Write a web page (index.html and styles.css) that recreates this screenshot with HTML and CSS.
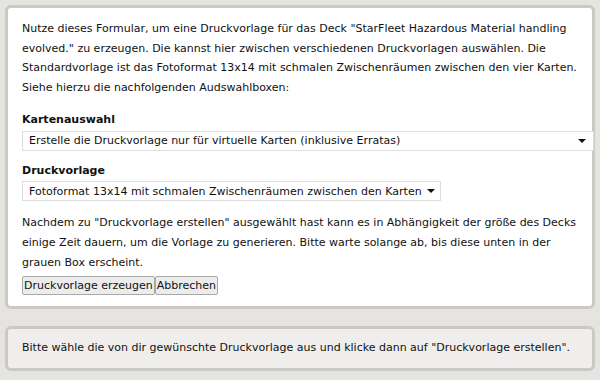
FILE: index.html
```html
<!doctype html>
<html lang="de">
  <head>
    <meta charset="utf-8">
    <meta name="viewport" content="width=device-width, initial-scale=1">
    <title>Druckvorlage erstellen</title>
    <link rel="stylesheet" href="styles.css">
  </head>
  <body>
    <form class="panel" id="form-druck">
      <p class="intro">Nutze dieses Formular, um eine Druckvorlage für das Deck "StarFleet Hazardous Material handling evolved." zu erzeugen. Die kannst hier zwischen verschiedenen Druckvorlagen auswählen. Die Standardvorlage ist das Fotoformat 13x14 mit schmalen Zwischenräumen zwischen den vier Karten. Siehe hierzu die nachfolgenden Audswahlboxen:</p>
      <label class="field-label" for="karten">Kartenauswahl</label>
      <div class="select-wrap wide">
        <select id="karten" name="karten">
          <option>Erstelle die Druckvorlage nur für virtuelle Karten (inklusive Erratas)</option>
          <option>Erstelle die Druckvorlage für alle Karten</option>
        </select>
      </div>
      <label class="field-label second" for="vorlage">Druckvorlage</label>
      <div class="select-wrap">
        <select id="vorlage" name="vorlage">
          <option>Fotoformat 13x14 mit schmalen Zwischenräumen zwischen den Karten</option>
        </select>
      </div>
      <p class="hint">Nachdem zu "Druckvorlage erstellen" ausgewählt hast kann es in Abhängigkeit der größe des Decks einige Zeit dauern, um die Vorlage zu generieren. Bitte warte solange ab, bis diese unten in der grauen Box erscheint.</p>
      <div class="buttons">
        <button type="submit">Druckvorlage erzeugen</button><button type="reset">Abbrechen</button>
      </div>
    </form>
    <div class="panel result">
      Bitte wähle die von dir gewünschte Druckvorlage aus und klicke dann auf "Druckvorlage erstellen".
    </div>
  </body>
</html>
```

FILE: styles.css
```css
body {
  margin: 0;
  padding: 5px 5px 0 5px;
  background-color: #e6e4e0;
  font-family: "DejaVu Sans", Verdana, sans-serif;
  font-size: 11px;
  line-height: 19.7px;
  color: #111;
}

.panel {
  display: block;
  margin: 0 0 17px 0;
  padding: 11px 14px 11px 14px;
  background: #fff;
  border: 3px solid #cbc9c5;
  border-radius: 6px;
}

.intro, .hint {
  margin: 0;
}

.field-label {
  display: block;
  margin-top: 12px;
  font-weight: bold;
}

.field-label.second {
  margin-top: 10px;
}

.select-wrap {
  position: relative;
  display: inline-block;
  margin-top: 1px;
  vertical-align: top;
}

.select-wrap.wide {
  display: block;
  width: calc(100% + 16px);
}

/* kleines Dreieck statt des Standardpfeils */
.select-wrap::after {
  content: "";
  position: absolute;
  right: 6px;
  top: 8px;
  border-left: 4px solid transparent;
  border-right: 4px solid transparent;
  border-top: 4px solid #111;
  pointer-events: none;
}

.select-wrap.wide::after {
  right: 8px;
}

select {
  display: block;
  width: 100%;
  height: 20px;
  margin: 0;
  padding: 0 18px 0 6px;
  font-family: inherit;
  font-size: 11px;
  color: #111;
  background: #fff;
  border: 1px solid #ddd;
  border-radius: 0;
  appearance: none;
  -webkit-appearance: none;
}

.hint {
  margin-top: 12px;
}

.buttons {
  margin-top: 4px;
  display: flex;
}

button {
  height: 19px;
  margin: 0;
  padding: 0 1px;
  font-family: inherit;
  font-size: 11px;
  color: #111;
  background: #ececec;
  border: 1px solid #a9a9a9;
  border-radius: 2px;
}

.result {
  margin-bottom: 0;
  padding: 9px 14px 10px 14px;
  background: #efeeec;
}
```
